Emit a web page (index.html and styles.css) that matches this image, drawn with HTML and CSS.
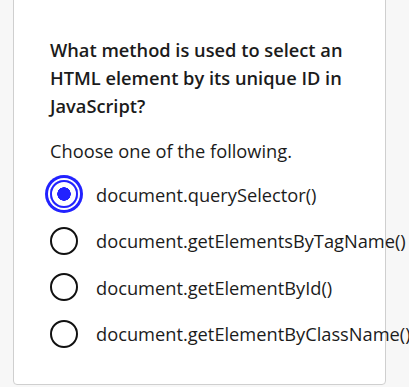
FILE: index.html
```html
<!DOCTYPE html>
<html lang="en">
<head>
  <meta charset="UTF-8" />
  <meta name="viewport" content="width=device-width, initial-scale=1.0" />
  <title>Quiz Question</title>
  <link rel="stylesheet" href="styles.css">
</head>
<body>
  <div class="card">
    <h2 class="question">What method is used to select an HTML element by its unique ID in JavaScript?</h2>
    <p class="hint">Choose one of the following.</p>

    <div class="options">
      <label class="option">
        <span class="radio checked"></span>
        <span class="option-text">document.querySelector()</span>
      </label>
      <label class="option">
        <span class="radio"></span>
        <span class="option-text">document.getElementsByTagName()</span>
      </label>
      <label class="option">
        <span class="radio"></span>
        <span class="option-text">document.getElementById()</span>
      </label>
      <label class="option">
        <span class="radio"></span>
        <span class="option-text">document.getElementByClassName()</span>
      </label>
    </div>
  </div>
</body>
</html>
```

FILE: styles.css
```css
body { margin: 0; background: #f7f7f7; font-family: "Open Sans", "Liberation Sans", sans-serif; color: #1b1b1b; overflow: hidden; }
.card { margin: -40px 0 0 13px; width: 373px; background: #fff; border: 1px solid #cfcfcf; border-radius: 4px; padding: 75px 0 34px 36px; box-sizing: border-box; height: 425px; }
.question { margin: 0; font-size: 18.25px; font-weight: 600; line-height: 28px; width: 305px; }
.hint { margin: 17px 0 0; font-size: 18.25px; line-height: 28px; }
.options { display: flex; flex-direction: column; gap: 18.5px; margin-top: 15px; }
.option { display: flex; align-items: center; gap: 18px; height: 28px; white-space: nowrap; font-size: 18.25px; }
.radio { width: 28px; height: 28px; box-sizing: border-box; border: 2.5px solid #111; border-radius: 50%; flex: none; }
.radio.checked { border-color: #2222ff; background: radial-gradient(circle, #2222ff 0 6.5px, #fff 7px); box-shadow: 0 0 0 2px #fff, 0 0 0 5px #2222ff; }
```
